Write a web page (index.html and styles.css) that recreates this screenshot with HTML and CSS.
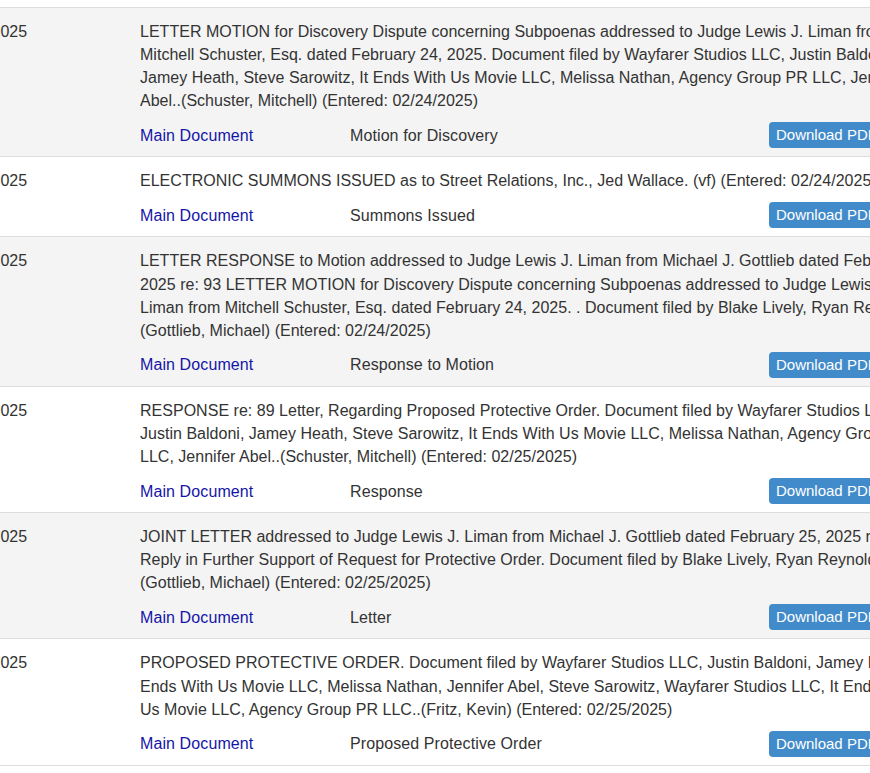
FILE: index.html
```html
<!DOCTYPE html>
<html lang="en">
<head>
<meta charset="utf-8">
<title>Docket</title>
<link rel="stylesheet" href="styles.css">
</head>
<body>
<div class="viewport">
  <div class="docket">
    <div class="entry shaded">
      <div class="date">02/24/2025</div>
      <div class="desc">
        <div class="text">LETTER MOTION for Discovery Dispute concerning Subpoenas addressed to Judge Lewis J. Liman from<br>Mitchell Schuster, Esq. dated February 24, 2025. Document filed by Wayfarer Studios LLC, Justin Baldoni,<br>Jamey Heath, Steve Sarowitz, It Ends With Us Movie LLC, Melissa Nathan, Agency Group PR LLC, Jennifer<br>Abel..(Schuster, Mitchell) (Entered: 02/24/2025)</div>
        <div class="doc-row"><a class="doc-link" href="#">Main Document</a><span class="doc-type">Motion for Discovery</span><a class="btn" href="#">Download PDF</a></div>
      </div>
    </div>
    <div class="entry">
      <div class="date">02/24/2025</div>
      <div class="desc">
        <div class="text">ELECTRONIC SUMMONS ISSUED as to Street Relations, Inc., Jed Wallace. (vf) (Entered: 02/24/2025)</div>
        <div class="doc-row"><a class="doc-link" href="#">Main Document</a><span class="doc-type">Summons Issued</span><a class="btn" href="#">Download PDF</a></div>
      </div>
    </div>
    <div class="entry shaded">
      <div class="date">02/24/2025</div>
      <div class="desc">
        <div class="text">LETTER RESPONSE to Motion addressed to Judge Lewis J. Liman from Michael J. Gottlieb dated February 24,<br>2025 re: 93 LETTER MOTION for Discovery Dispute concerning Subpoenas addressed to Judge Lewis J.<br>Liman from Mitchell Schuster, Esq. dated February 24, 2025. . Document filed by Blake Lively, Ryan Reynolds.<br>(Gottlieb, Michael) (Entered: 02/24/2025)</div>
        <div class="doc-row"><a class="doc-link" href="#">Main Document</a><span class="doc-type">Response to Motion</span><a class="btn" href="#">Download PDF</a></div>
      </div>
    </div>
    <div class="entry">
      <div class="date">02/25/2025</div>
      <div class="desc">
        <div class="text">RESPONSE re: 89 Letter, Regarding Proposed Protective Order. Document filed by Wayfarer Studios LLC,<br>Justin Baldoni, Jamey Heath, Steve Sarowitz, It Ends With Us Movie LLC, Melissa Nathan, Agency Group PR<br>LLC, Jennifer Abel..(Schuster, Mitchell) (Entered: 02/25/2025)</div>
        <div class="doc-row"><a class="doc-link" href="#">Main Document</a><span class="doc-type">Response</span><a class="btn" href="#">Download PDF</a></div>
      </div>
    </div>
    <div class="entry shaded">
      <div class="date">02/25/2025</div>
      <div class="desc">
        <div class="text">JOINT LETTER addressed to Judge Lewis J. Liman from Michael J. Gottlieb dated February 25, 2025 re:<br>Reply in Further Support of Request for Protective Order. Document filed by Blake Lively, Ryan Reynolds.<br>(Gottlieb, Michael) (Entered: 02/25/2025)</div>
        <div class="doc-row"><a class="doc-link" href="#">Main Document</a><span class="doc-type">Letter</span><a class="btn" href="#">Download PDF</a></div>
      </div>
    </div>
    <div class="entry">
      <div class="date">02/25/2025</div>
      <div class="desc">
        <div class="text">PROPOSED PROTECTIVE ORDER. Document filed by Wayfarer Studios LLC, Justin Baldoni, Jamey Heath, It<br>Ends With Us Movie LLC, Melissa Nathan, Jennifer Abel, Steve Sarowitz, Wayfarer Studios LLC, It Ends With<br>Us Movie LLC, Agency Group PR LLC..(Fritz, Kevin) (Entered: 02/25/2025)</div>
        <div class="doc-row"><a class="doc-link" href="#">Main Document</a><span class="doc-type">Proposed Protective Order</span><a class="btn" href="#">Download PDF</a></div>
      </div>
    </div>
  </div>
</div>
</body>
</html>
```
FILE: styles.css
```css
html, body {
  margin: 0;
  padding: 0;
  background: #ffffff;
}

body {
  font-family: "Liberation Sans", Arial, Helvetica, sans-serif;
  font-size: 16px;
  color: #333333;
}

.viewport {
  width: 870px;
  height: 773px;
  overflow: hidden;
  padding-top: 7px;
  box-sizing: border-box;
}

.docket {
  width: 1260px;
  margin-left: -53px;
  border-bottom: 1px solid #dddddd;
}

.entry {
  display: grid;
  grid-template-columns: 193px 880px 1fr;
  border-top: 1px solid #dddddd;
  padding: 12px 0 8px;
  background: #ffffff;
}

.entry.shaded {
  background: #f4f4f4;
}

.date {
  line-height: 23.1px;
  white-space: nowrap;
}

.text {
  line-height: 23.1px;
  letter-spacing: 0.02px;
  white-space: nowrap;
}

.doc-row {
  display: grid;
  grid-template-columns: 210px 420px auto;
  align-items: center;
  margin-top: 10px;
  height: 26px;
}

.doc-link {
  color: #1515a8;
  text-decoration: none;
  line-height: 23px;
  letter-spacing: 0.1px;
}

.doc-type {
  line-height: 23px;
  letter-spacing: 0.1px;
}

.btn {
  justify-self: start;
  display: inline-block;
  background: #428bca;
  color: #ffffff;
  font-size: 15px;
  line-height: 26px;
  padding: 0 7px;
  margin-left: -1px;
  border-radius: 4px;
  text-decoration: none;
  white-space: nowrap;
}
```
